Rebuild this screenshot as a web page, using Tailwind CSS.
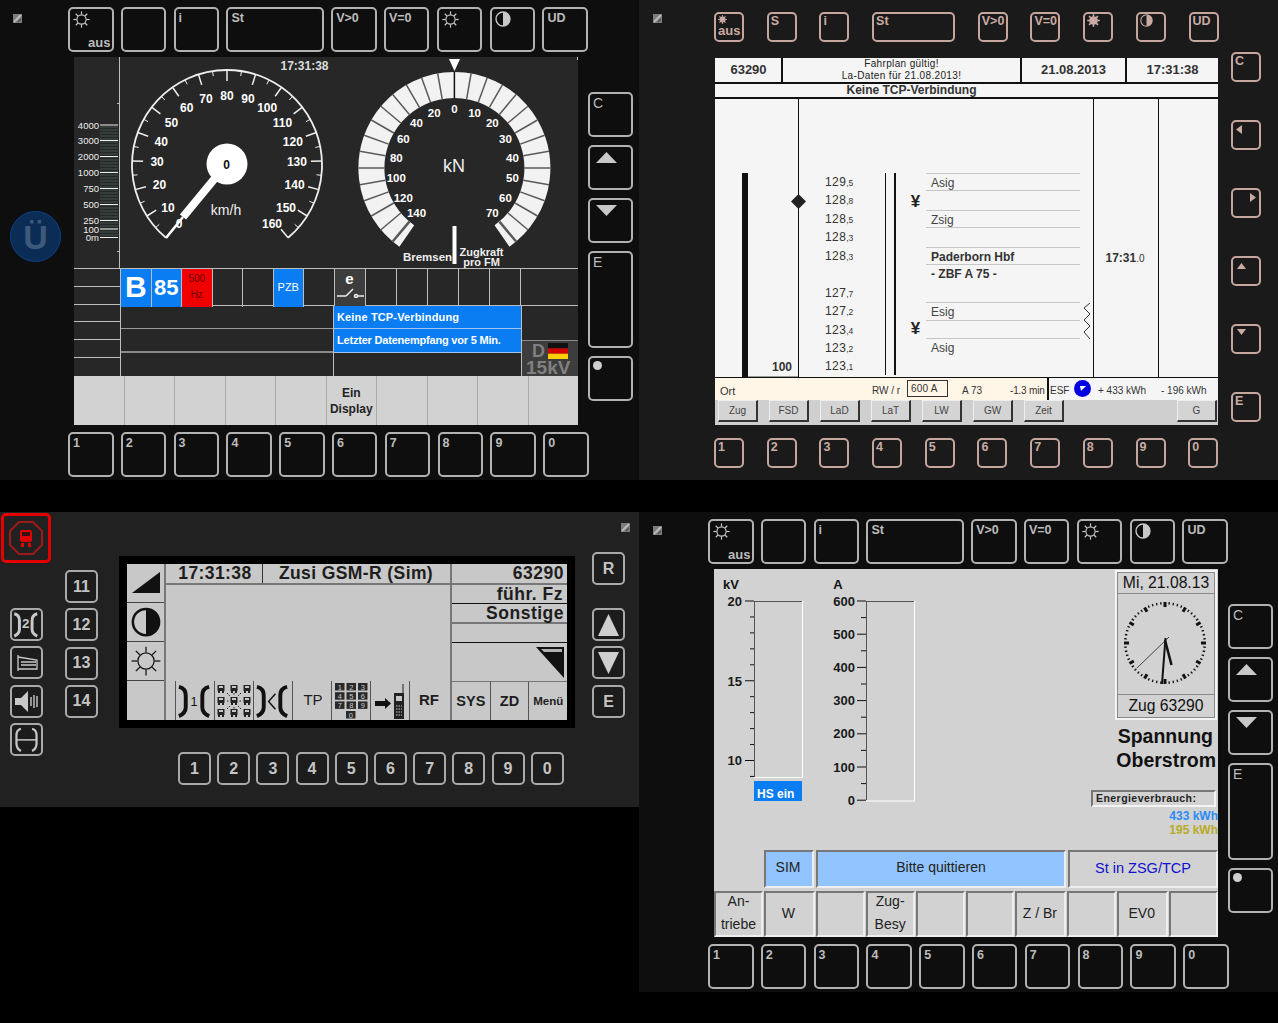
<!DOCTYPE html>
<html lang="de">
<head>
  <meta charset="UTF-8" />
  <title>Zusi Führerstand Displays</title>
  <script src="https://cdn.jsdelivr.net/npm/@tailwindcss/browser@4"></script>
</head>
<body class="bg-black font-['Liberation_Sans',sans-serif] w-[1278px] h-[1023px] overflow-hidden">
  <div class="grid grid-cols-[639px_639px] grid-rows-[480px_511px] gap-y-[32px]">

    <!-- Tacho display -->
    <section class="flex bg-[#0e0e0e] text-white">
      <div id="tlLeft" class="w-[68px] pl-[13px] pt-[14px]"></div>
      <div class="w-[520px] pt-[7px]">
        <div id="tlTop" class="flex gap-[7.3px]"></div>
        <div class="ml-[6px] mt-[5px] w-[504px] h-[368px] bg-[#272727] flex flex-col">
          <div id="tacho" class="h-[211px]"></div>
          <div class="flex h-[108px] border-t border-[#bdbdbd]">
            <div id="tlRows" class="w-[47px] border-r border-[#bdbdbd] flex flex-col"></div>
            <div class="flex-1 flex flex-col">
              <div id="tlStatus" class="h-[37px] border-b border-[#bdbdbd] grid grid-cols-[repeat(7,30.5px)_repeat(6,31px)_1fr]"></div>
              <div class="flex-1 flex">
                <div class="w-[213px] border-r border-[#bdbdbd] flex flex-col">
                  <div class="h-[23px] border-b border-[#9a9a9a]"></div>
                  <div class="h-[24px] border-b-2 border-[#8a8a8a]"></div>
                </div>
                <div class="w-[187px] flex flex-col">
                  <div class="h-[23px] bg-[#0a7df2] border-b border-[#9fc6ee] px-[3px] text-[11px] font-bold leading-[23px] tracking-[0.15px]">Keine TCP-Verbindung</div>
                  <div class="h-[24px] bg-[#0a7df2] border-b border-[#9fc6ee] px-[3px] text-[11px] font-bold leading-[23px] tracking-[-0.2px] whitespace-nowrap">Letzter Datenempfang vor 5 Min.</div>
                </div>
                <div class="flex-1 border-l border-[#bdbdbd] flex flex-col justify-end">
                  <div class="h-[36px] bg-[#3d3d3d] border-t border-[#8a8a8a] relative text-[#808080] font-bold">
                    <span class="absolute left-[10px] top-[3px] text-[18px] leading-[14px]">D</span>
                    <svg class="absolute left-[26px] top-[2px]" width="20" height="16"><rect width="20" height="5.4" fill="#111"/><rect y="5.4" width="20" height="5.3" fill="#d20000"/><rect y="10.7" width="20" height="5.3" fill="#ffce00"/></svg>
                    <span class="absolute left-[4px] top-[19px] text-[19px] leading-[15px]">15kV</span>
                  </div>
                </div>
              </div>
            </div>
          </div>
          <div id="tlSoft" class="flex-1 flex bg-[#d2d2d2] text-[#222] text-[12px] font-bold leading-[16px] text-center"></div>
        </div>
        <div id="tlBottom" class="mt-[7px] flex gap-[7.3px]"></div>
      </div>
      <div id="tlRight" class="w-[45px] pt-[92px] flex flex-col gap-[8px]"></div>
    </section>

    <!-- EBuLa display -->
    <section class="flex bg-[#1a1a1a] text-[#222]">
      <div id="trLeft" class="w-[75px] pl-[14px] pt-[14px]"></div>
      <div class="w-[517px] pt-[12px]">
        <div id="trTop" class="flex gap-[22.7px]"></div>
        <div class="ml-[1px] mt-[16px] w-[503px] h-[367px] bg-[#f5f5f5] flex flex-col">
          <div class="h-[26px] flex border-b-2 border-[#111] font-bold text-[13px] text-[#333] text-center">
            <div class="w-[68px] border-r-2 border-[#111] leading-[24px] pl-[1px]">63290</div>
            <div class="w-[239px] border-r-2 border-[#111] font-normal text-[10px] leading-[12px] text-[#222] tracking-[0.35px] whitespace-nowrap">Fahrplan gültig!<br>La-Daten für 21.08.2013!</div>
            <div class="w-[105px] border-r-2 border-[#111] leading-[24px]">21.08.2013</div>
            <div class="flex-1 leading-[24px]">17:31:38</div>
          </div>
          <div class="h-[15px] border-b-2 border-[#111] font-bold text-[12px] leading-[13px] text-[#333] text-center pr-[110px]">Keine TCP-Verbindung</div>
          <div class="h-[278px] flex">
            <div class="w-[84px] border-r border-[#111] relative">
              <div class="absolute left-[27px] top-[74px] bottom-0 w-[6px] bg-[#111]"></div>
              <div class="absolute left-[33px] right-0 bottom-0 h-px bg-[#999]"></div>
              <div class="absolute right-[6px] bottom-[1px] text-[12px] font-bold text-[#333]">100</div>
              <svg class="absolute left-[76px] top-[95px] z-10" width="15" height="15"><polygon points="7.5,0 15,7.5 7.5,15 0,7.5" fill="#222"/></svg>
            </div>
            <div class="w-[294px] relative pt-[74px] flex">
              <div id="km" class="w-[86px] pl-[26px] grid grid-rows-[repeat(11,18.45px)] text-[12px] leading-[18.45px] tracking-[0.4px] text-[#333]"></div>
              <div class="w-px bg-[#111] h-[202px]"></div>
              <div class="ml-[8px] w-[2px] bg-[#111] h-[202px]"></div>
              <div class="w-[31px] relative font-bold text-[17px] text-[#222] text-center pl-[8px]">
                <span class="absolute left-[8px] right-0 top-[16px]">¥</span>
                <span class="absolute left-[8px] right-0 top-[143px]">¥</span>
              </div>
              <div id="sigs" class="w-[153px] grid grid-rows-[repeat(11,18.45px)] text-[12px] leading-[18px] text-[#444] pl-[4px]"></div>
              <svg class="absolute left-[284px] top-[203px]" width="8" height="38" fill="none" stroke="#333"><path d="M7 1 L1 6 L7 12 L1 18 L7 24 L1 30 L7 37"/></svg>
            </div>
            <div class="w-[65px] border-l border-[#111] text-center pt-[150px] text-[12px] font-bold text-[#333] pr-[2px]">17:31<span class="font-normal text-[10px]">.0</span></div>
            <div class="flex-1 border-l border-[#111]"></div>
          </div>
          <div class="h-[23px] flex border-t border-[#111] text-[10px] text-[#333]">
            <div class="w-[332px] bg-[#fff6e8] flex items-center relative">
              <span class="absolute left-[5px] top-[5px] text-[11px]">Ort</span>
              <span class="absolute left-[157px] top-[5px]">RW / r</span>
              <span class="absolute left-[192px] top-[2px] w-[41px] h-[17px] border border-[#333] pl-[3px] leading-[15px] tracking-[0.2px]">600 A</span>
              <span class="absolute left-[247px] top-[5px]">A 73</span>
              <span class="absolute left-[295px] top-[5px] whitespace-nowrap tracking-[-0.2px]">-1.3 min</span>
            </div>
            <div class="w-[2px] bg-[#111]"></div>
            <div class="flex-1 relative">
              <span class="absolute left-[1px] top-[5px]">ESF</span>
              <svg class="absolute left-[25px] top-[2px]" width="17" height="17"><circle cx="8.5" cy="8.5" r="8.5" fill="#0000e0"/><polygon points="6,6 12,6 7,11" fill="#fff"/></svg>
              <span class="absolute left-[49px] top-[5px] whitespace-nowrap text-[10px]">+ 433 kWh</span>
              <span class="absolute left-[112px] top-[5px] whitespace-nowrap text-[10px]">- 196 kWh</span>
            </div>
          </div>
          <div id="trSoft" class="flex-1 bg-[#cfcfcf] flex pl-[3px] gap-[11px]"></div>
        </div>
        <div id="trBottom" class="mt-[13px] flex gap-[22.7px]"></div>
      </div>
      <div id="trRight" class="w-[30px] pt-[52px] flex flex-col gap-[38px]"></div>
    </section>

    <!-- GSM-R display -->
    <section class="flex bg-[#212121] h-[295px] text-[#c4c4c4]">
      <div class="w-[65px]">
        <div class="mt-[1px] ml-[1px] w-[50px] h-[50px] border-[3px] border-[#e40000] rounded-[5px] flex items-center justify-center">
          <svg width="36" height="36" viewBox="0 0 36 36" fill="none"><polygon points="11,2 25,2 34,11 34,25 25,34 11,34 2,25 2,11" stroke="#9c1a1a" stroke-width="2"/><rect x="12" y="10" width="12" height="12" rx="2" fill="#e00000"/><rect x="14" y="12" width="8" height="4" fill="#3a0f0f"/><rect x="13" y="23" width="3" height="4" fill="#e00000"/><rect x="20" y="23" width="3" height="4" fill="#e00000"/></svg>
        </div>
        <div id="blIcons" class="ml-[10px] mt-[45px] flex flex-col gap-[5.3px]"></div>
      </div>
      <div id="blNums" class="w-[54px] pt-[58px] flex flex-col gap-[5.3px]"></div>
      <div class="w-[473px] pt-[44px]">
        <div class="w-[456px] h-[172px] bg-black p-[8px]">
          <div class="flex h-[156px] bg-[#c8c8c8] text-[#1d1d1d] font-bold">
            <div id="gsmLeft" class="w-[39px] border-r-2 border-[#777] flex flex-col"></div>
            <div class="w-[284px] flex flex-col">
              <div class="h-[21px] flex border-b-2 border-[#777] text-[17.5px] leading-[19px] tracking-[0.4px]">
                <div class="w-[97px] border-r border-[#333] text-center pl-[2px]">17:31:38</div>
                <div class="flex-1 text-center pr-[1px] whitespace-nowrap">Zusi GSM-R (Sim)</div>
              </div>
              <div class="h-[96px]"></div>
              <div id="gsmSoftA" class="h-[39px] flex pl-[9px]"></div>
            </div>
            <div class="flex-1 border-l-2 border-[#777] flex flex-col text-right text-[17.5px] leading-[19px] tracking-[0.5px]">
              <div class="h-[21px] border-b-2 border-[#777] pr-[3px]">63290</div>
              <div class="h-[19px] border-b border-[#111] pr-[4px]">führ. Fz</div>
              <div class="h-[20px] border-b-2 border-[#777] pr-[3px]">Sonstige</div>
              <div class="h-[19px] border-b border-[#111]"></div>
              <div class="h-[38px] flex justify-end items-center pr-[3px]">
                <svg width="28" height="31"><polygon points="0,0 28,0 28,31" fill="#111"/><polygon points="5,2 26,2 26,5 8,5" fill="#b0b0b0"/></svg>
              </div>
              <div id="gsmSoftB" class="h-[39px] flex border-t border-[#777]"></div>
            </div>
          </div>
        </div>
        <div id="blBottom" class="mt-[24px] ml-[59px] flex gap-[6.2px]"></div>
      </div>
      <div class="w-[47px] relative pt-[40px]">
        <div id="blRight" class="flex flex-col"></div>
        <div id="blMark" class="absolute left-[29px] top-[11px]"></div>
      </div>
    </section>

    <!-- Spannung / Oberstrom display -->
    <section class="flex bg-[#0e0e0e] h-[480px] text-[#222]">
      <div id="brLeft" class="w-[69px] pl-[14px] pt-[14px]"></div>
      <div class="w-[520px] pt-[7px]">
        <div id="brTop" class="flex gap-[7.3px]"></div>
        <div class="ml-[6px] mt-[5px] w-[504px] h-[368px] bg-[#d2d2d2] flex flex-col">
          <div class="h-[281px] flex">
            <div id="bars" class="w-[377px]"></div>
            <div class="w-[127px] flex flex-col items-stretch">
              <div class="ml-[24px] mr-px mt-px h-[150px] border-2 border-[#f4f4f4] flex flex-col text-center text-[15.7px] text-[#111]">
                <div class="h-[22px] border border-[#888] leading-[20px] whitespace-nowrap">Mi, 21.08.13</div>
                <div id="clock" class="h-[100px] border-x border-[#888]"></div>
                <div class="flex-1 border border-[#888] leading-[21px]">Zug 63290</div>
              </div>
              <div class="mt-[4px] text-right text-[19.5px] font-bold leading-[24px] text-[#111] pr-[2px]"><span class="mr-[3px]">Spannung</span><br>Oberstrom</div>
              <div class="mt-[18px] h-[17px] w-[125px] border-2 border-t-[#777] border-l-[#777] border-r-[#f4f4f4] border-b-[#f4f4f4] text-[10.5px] font-bold leading-[13px] pl-[3px] tracking-[0.45px] whitespace-nowrap">Energieverbrauch:</div>
              <div class="text-right text-[12px] font-bold leading-[14px] text-[#2a8cf4] mt-[2px] whitespace-nowrap">433 kWh</div>
              <div class="text-right text-[12px] font-bold leading-[14px] text-[#b8aa28] whitespace-nowrap">195 kWh</div>
            </div>
          </div>
          <div class="h-[38px] ml-[50px] flex gap-[2px] text-[14px] text-center leading-[31px]">
            <div class="w-[50px] bg-[#92c5ff] border-2 border-t-[#777] border-l-[#777] border-r-[#eee] border-b-[#eee] pr-[2px]">SIM</div>
            <div class="w-[250px] bg-[#92c5ff] border-2 border-t-[#777] border-l-[#777] border-r-[#eee] border-b-[#eee]">Bitte quittieren</div>
            <div class="w-[150px] text-[#1010d0] border-2 border-t-[#777] border-l-[#777] border-r-[#eee] border-b-[#eee] leading-[33px] text-[14.5px] whitespace-nowrap">St in ZSG/TCP</div>
          </div>
          <div id="brSoft" class="mt-[3px] h-[46px] flex gap-px"></div>
        </div>
        <div id="brBottom" class="mt-[7px] flex gap-[7.3px]"></div>
      </div>
      <div id="brRight" class="w-[45px] pt-[92px] flex flex-col gap-[8px]"></div>
    </section>
  </div>

  <script>
    const $ = id => document.getElementById(id);
    const GREY = 'border-[#b2b2b2] text-[#bcbcbc] bg-[#0e0e0e] pl-[3px] pt-[2px]';
    const TAN = 'border-[#c4a69d] text-[#c9aba2] bg-[#1a1a1a] pl-[2px] pt-0';
    const BIG = 'w-[45.5px] h-[45px]';
    const BIG_WIDE = 'w-[97.5px] h-[45px]';
    const TALL = 'w-[45px] h-[45px]';
    const TALLER = 'w-[45px] h-[97px]';
    const SMALL = 'w-[30px] h-[30px]';
    const SMALL_WIDE = 'w-[83px] h-[30px]';

    const sun = (size, stroke, filled) => {
      let rays = '';
      for (let a = 0; a < 360; a += 45) {
        const s = Math.sin(a * Math.PI / 180), c = Math.cos(a * Math.PI / 180);
        rays += `<line x1="${12 + 7 * s}" y1="${12 - 7 * c}" x2="${12 + 11.5 * s}" y2="${12 - 11.5 * c}"/>`;
      }
      const sw = filled ? 3 : Math.max(1, 28 / size);
      return `<svg width="${size}" height="${size}" viewBox="0 0 24 24" fill="${filled ? stroke : 'none'}" stroke="${stroke}" stroke-width="${sw}"><circle cx="12" cy="12" r="6.5"/>${rays}</svg>`;
    };
    const contrast = (size, stroke, filled) => `<svg width="${size}" height="${size}" viewBox="0 0 24 24"><circle cx="12" cy="12" r="10.5" fill="${filled ? stroke : 'none'}" stroke="${stroke}" stroke-width="2"/><path d="M12 1.5 A10.5 10.5 0 0 1 12 22.5 Z" fill="${stroke}"/></svg>`;
    const tri = (dir, w, h, fill) => {
      const pts = { up: `0,${h} ${w},${h} ${w / 2},0`, down: `0,0 ${w},0 ${w / 2},${h}`, left: `${w},0 ${w},${h} 0,${h / 2}`, right: `0,0 0,${h} ${w},${h / 2}` }[dir];
      return `<svg width="${w}" height="${h}"><polygon points="${pts}" fill="${fill}"/></svg>`;
    };
    const mark = `<svg width="9" height="9"><rect width="9" height="9" fill="#7c7c7c"/><path d="M1 8 L8 1" stroke="#bbb" stroke-width="2"/><path d="M5 8 L8 5" stroke="#555" stroke-width="1.5"/></svg>`;

    // outlined soft key of the display frames
    const key = (size, tone, label = '', extra = '') => `<div class="${size} ${tone} relative shrink-0 border-2 rounded-[5px] text-[12.5px] font-bold leading-[14px]">${label}${extra}</div>`;

    const bigTop = tone => [
      key(BIG, tone, sun(17, '#c8c8c8'), `<span class="absolute right-[1px] bottom-0 text-[13px]">aus</span>`),
      key(BIG, tone), key(BIG, tone, 'i'), key(BIG_WIDE, tone, 'St'),
      key(BIG, tone, 'V>0'), key(BIG, tone, 'V=0'), key(BIG, tone, sun(17, '#c8c8c8')),
      key(BIG, tone, contrast(16, '#c8c8c8')), key(BIG, tone, 'UD')
    ].join('');
    const digits = '1234567890'.split('');
    const bigBottom = tone => digits.map(d => key(BIG, tone, d)).join('');
    const letter = s => `<span class="font-normal text-[14px]">${s}</span>`;
    const bigRight = tone => [
      key(TALL, tone, letter('C')),
      key(TALL, tone, `<div class="pl-[3px] pt-[3px]">${tri('up', 21, 11, '#c8c8c8')}</div>`),
      key(TALL, tone, `<div class="pl-[3px] pt-[3px]">${tri('down', 21, 11, '#c8c8c8')}</div>`),
      key(TALLER, tone, letter('E')),
      key(TALL, tone, `<div class="w-[9px] h-[9px] rounded-full bg-[#cfcfcf] mt-[1px]"></div>`)
    ].join('');

    $('tlLeft').innerHTML = mark + `<div class="mt-[188px] -ml-[3px] w-[51px] h-[51px] rounded-full bg-[#0a2c55] border border-[#0d4389] flex items-center justify-center text-[34px] font-bold text-[#3d5a7b] leading-none">Ü</div>`;
    $('tlTop').innerHTML = bigTop(GREY);
    $('tlBottom').innerHTML = bigBottom(GREY);
    $('tlRight').innerHTML = bigRight(GREY);
    $('brLeft').innerHTML = mark;
    $('brTop').innerHTML = bigTop(GREY);
    $('brBottom').innerHTML = bigBottom(GREY);
    $('brRight').innerHTML = bigRight(GREY);

    // left scale rows beside status fields
    $('tlRows').innerHTML = Array.from({ length: 6 }, (_, i) => `<div class="h-[18px] ${i < 5 ? 'border-b border-[#bdbdbd]' : ''}"></div>`).join('');

    const cellLine = 'border-r border-[#bdbdbd]';
    const status = [
      `<div class="bg-[#0a7df2] ${cellLine} text-[30px] font-bold text-center leading-[36px]">B</div>`,
      `<div class="bg-[#0a7df2] ${cellLine} text-[22px] font-bold text-center leading-[38px]">85</div>`,
      `<div class="bg-[#f00000] ${cellLine} text-[10px] text-[#6a0000] text-center leading-[16px] pt-[2px]">500<br>Hz</div>`,
      `<div class="${cellLine}"></div>`, `<div class="${cellLine}"></div>`,
      `<div class="bg-[#0a7df2] ${cellLine} text-[11px] text-center leading-[36px]">PZB</div>`,
      `<div class="${cellLine}"></div>`,
      `<div class="bg-[#3d3d3d] ${cellLine} flex flex-col items-center"><span class="text-[15px] font-bold leading-[18px] mt-[1px]">e</span><svg width="28" height="10" fill="none" stroke="#eee" stroke-width="1.5"><path d="M1 8 H10 M10 8 L17 1"/><circle cx="20" cy="8" r="1.5"/><path d="M22 8 H28"/></svg></div>`
    ];
    for (let i = 0; i < 5; i++) status.push(`<div class="${cellLine}"></div>`);
    status.push('<div></div>');
    $('tlStatus').innerHTML = status.join('');

    $('tlSoft').innerHTML = Array.from({ length: 10 }, (_, i) => `<div class="flex-1 ${i ? 'border-l border-[#a9a9a9]' : ''} pt-[9px]">${i === 5 ? 'Ein<br>Display' : ''}</div>`).join('');

    // tacho and force gauge, drawn in page coordinates
    const polar = (cx, cy, r, deg) => [cx + r * Math.sin(deg * Math.PI / 180), cy - r * Math.cos(deg * Math.PI / 180)];
    const seg = (cx, cy, r1, r2, deg) => {
      const [x1, y1] = polar(cx, cy, r1, deg), [x2, y2] = polar(cx, cy, r2, deg);
      return `x1="${x1.toFixed(1)}" y1="${y1.toFixed(1)}" x2="${x2.toFixed(1)}" y2="${y2.toFixed(1)}"`;
    };
    const label = (x, y, t, size, fill = '#fff', weight = 'bold', anchor = 'middle') => `<text x="${x}" y="${y}" font-size="${size}" font-weight="${weight}" fill="${fill}" text-anchor="${anchor}">${t}</text>`;

    let t = `<svg width="504" height="211" viewBox="74 57 504 211">`;
    t += `<path d="M119.5 57 V268 M117 103.5 H120 M117 251.5 H120 M577.5 57 V60" stroke="#bdbdbd" fill="none"/>`;
    for (let y = 127; y < 237; y += 3) t += `<line x1="100" y1="${y}" x2="118" y2="${y}" stroke="#41564f"/>`;
    [['4000', 125], ['3000', 140.5], ['2000', 156.5], ['1000', 172.5], ['750', 188.5], ['500', 204.5], ['250', 220.5], ['100', 229], ['0m', 237.5]].forEach(([s, y]) => {
      t += `<line x1="100" y1="${y}" x2="118" y2="${y}" stroke="#eee"/>`;
      t += label(99, y + 3.5, s, 9.5, '#eee', 'normal', 'end');
    });
    const [ax, ay] = polar(227, 165, 95, -140), [bx, by] = polar(227, 165, 95, 140);
    t += `<path d="M${ax} ${ay} A95 95 0 1 1 ${bx} ${by}" fill="none" stroke="#eee" stroke-width="1.8"/>`;
    for (let v = 0; v <= 160; v += 5) {
      const d = -140 + v * 1.75;
      t += `<line ${seg(227, 165, 95, v % 10 ? 90 : 84, d)} stroke="#eee" stroke-width="${v % 10 ? 1 : 1.5}"/>`;
      if (v && v % 10 === 0) {
        const [x, y] = polar(227, 165, 70, d);
        // lower labels sit a little below their polar place
        const dy = v === 10 || v >= 150 ? 9 : v === 20 || v === 140 ? 6 : 4.5;
        t += label(x.toFixed(1), (y + dy).toFixed(1), v, 12);
      }
    }
    t += label(179, 228, '0', 12);
    t += `<line x1="216" y1="177" x2="183" y2="217" stroke="#fff" stroke-width="8"/><line x1="183" y1="217" x2="166" y2="238" stroke="#fff" stroke-width="2.5"/>`;
    t += `<circle cx="227" cy="164" r="20.5" fill="#fff"/>`;
    t += label(226.5, 168.5, '0', 12, '#111');
    t += label(226, 215, 'km/h', 14, '#eee', 'normal');
    t += label(304.5, 69.5, '17:31:38', 12, '#ddd');

    const [cx, cy] = [454.4, 168];
    const [fa, fb] = [polar(cx, cy, 83, -145), polar(cx, cy, 83, 145)];
    t += `<path d="M${fa[0]} ${fa[1]} A83 83 0 1 1 ${fb[0]} ${fb[1]}" fill="none" stroke="#f2f2f2" stroke-width="26"/>`;
    for (let d = -140; d <= 140; d += 10) {
      t += `<line ${seg(cx, cy, 70, 96, d)} stroke="${d ? '#5a5a5a' : '#111'}" stroke-width="${Math.abs(d) === 140 ? 2.5 : 1.5}"/>`;
    }
    t += `<polygon points="449,59 460,59 454.5,71" fill="#fff"/>`;
    for (let n = 0; n <= 7; n++) {
      const [x, y] = polar(cx, cy, 59, -n * 20);
      t += label(x.toFixed(1), (y + 4).toFixed(1), n * 20, 11.5);
      if (n) {
        const [x2, y2] = polar(cx, cy, 59, n * 20);
        t += label(x2.toFixed(1), (y2 + 4).toFixed(1), n * 10, 11.5);
      }
    }
    t += label(454, 172, 'kN', 18, '#eee', 'normal');
    t += `<rect x="452.5" y="226" width="4" height="38" fill="#fff"/>`;
    t += label(427.5, 261, 'Bremsen', 11.5, '#eee');
    t += label(481.5, 256, 'Zugkraft', 11, '#eee');
    t += label(481.5, 266, 'pro FM', 11, '#eee');
    t += `</svg>`;
    $('tacho').innerHTML = t;

    // EBuLa
    $('trLeft').innerHTML = mark;
    $('trTop').innerHTML = [
      key(SMALL, TAN, `<div class="flex flex-col pt-[1px]">${sun(9, '#c9aba2', true)}<span class="text-[13px] leading-[13px]">aus</span></div>`),
      key(SMALL, TAN, 'S'), key(SMALL, TAN, 'i'), key(SMALL_WIDE, TAN, 'St'),
      key(SMALL, TAN, 'V>0'), key(SMALL, TAN, 'V=0'), key(SMALL, TAN, sun(13, '#c9aba2', true)),
      key(SMALL, TAN, contrast(13, '#c9aba2')), key(SMALL, TAN, 'UD')
    ].join('');
    $('trBottom').innerHTML = digits.map(d => key(SMALL, TAN, d)).join('');
    $('trRight').innerHTML = [
      key(SMALL, TAN, 'C'),
      key(SMALL, TAN, `<div class="pt-[3px] pl-[1px]">${tri('left', 6, 9, '#c9aba2')}</div>`),
      key(SMALL, TAN, `<div class="pt-[3px] pl-[15px]">${tri('right', 6, 9, '#c9aba2')}</div>`),
      key(SMALL, TAN, `<div class="pt-[5px] pl-[2px]">${tri('up', 9, 6, '#c9aba2')}</div>`),
      key(SMALL, TAN, `<div class="pt-[3px] pl-[2px]">${tri('down', 9, 6, '#c9aba2')}</div>`),
      key(SMALL, TAN, 'E')
    ].join('');
    $('km').innerHTML = [['129', '5'], ['128', '8'], ['128', '5'], ['128', '3'], ['128', '3'], ['', ''], ['127', '7'], ['127', '2'], ['123', '4'], ['123', '2'], ['123', '1']]
      .map(([a, b]) => `<div>${a}<span class="text-[8.5px] tracking-normal">${b && ',' + b}</span></div>`).join('');
    // rows of the signal list: text, bold, lines at top / bottom
    const LINE_TB = 'border-t border-b border-[#c6c6c6]', LINE_B = 'border-b border-[#c6c6c6]';
    $('sigs').innerHTML = [
      ['Asig', 0, LINE_TB], ['', 0, ''], ['Zsig', 0, LINE_TB], ['', 0, ''], ['Paderborn Hbf', 1, LINE_TB], ['- ZBF A 75 -', 1, ''],
      ['', 0, ''], ['Esig', 0, LINE_TB], ['', 0, LINE_B], ['Asig', 0, ''], ['', 0, '']
    ].map(([s, b, l]) => `<div class="-ml-[5px] pl-[5px] ${l} ${b ? 'font-bold text-[#333]' : ''}">${s}</div>`).join('');
    const flat = 'h-[22px] mt-0 bg-[#d4d4d4] border-t border-l border-[#eee] border-b-2 border-r-2 border-b-[#333] border-r-[#333] text-[10px] text-[#444] text-center leading-[20px]';
    $('trSoft').innerHTML = ['Zug', 'FSD', 'LaD', 'LaT', 'LW', 'GW', 'Zeit'].map(s => `<div class="${flat} w-[40px]">${s}</div>`).join('')
      + `<div class="${flat} w-[40px] ml-[102px]">G</div>`;

    // GSM-R
    const MINI = 'w-[33px] h-[33px]';
    const miniTone = 'border-[#a9a9a9] bg-[#1c1c1c] text-[#c4c4c4]';
    const mini = (inner, cls = '') => `<div class="${MINI} ${miniTone} ${cls} shrink-0 border-2 rounded-[5px] flex items-center justify-center text-[16px] font-bold">${inner}</div>`;
    const bracket = (mid, stroke, w, h, sw) => `<svg width="${w}" height="${h}" viewBox="0 0 39 39" fill="none" stroke="${stroke}" stroke-width="${sw}"><path d="M3 5 C8 6 10 10 10 14 V26 C10 30 8 33 3 35"/><path d="M34 5 C29 6 27 10 27 14 V26 C27 30 29 33 34 35"/>${mid}</svg>`;
    const lightTxt = (s, y, size) => `<text x="18.5" y="${y}" text-anchor="middle" font-size="${size}" fill="#c8c8c8" stroke="none" font-weight="bold">${s}</text>`;
    $('blIcons').innerHTML = [
      mini(bracket(lightTxt('2', 24, 18), '#c8c8c8', 29, 29, 4)),
      mini(`<svg width="22" height="22" viewBox="0 0 22 22" fill="none" stroke="#c8c8c8" stroke-width="1.3"><path d="M2 3 V19 M2 5 L21 8 V17 H2 M5 10 H20 M5 13 H20"/></svg>`),
      mini(`<svg width="27" height="27" viewBox="0 0 27 27"><path d="M2 10 H8 L15 3 V24 L8 17 H2 Z" fill="#c8c8c8"/><path d="M18 9 V18 M21 7 V20 M24 8 V19" stroke="#c8c8c8" stroke-width="1.4"/></svg>`),
      mini(`<svg width="29" height="29" viewBox="0 0 39 39" fill="none" stroke="#c8c8c8" stroke-width="3"><path d="M12 5 C8 6 6 9 6 14 V25 C6 30 8 33 12 35"/><path d="M27 5 C31 6 33 9 33 14 V25 C33 30 31 33 27 35"/><path d="M6 20 H33" stroke-width="2"/></svg>`)
    ].join('');
    $('blNums').innerHTML = ['11', '12', '13', '14'].map(n => mini(n)).join('');
    $('blBottom').innerHTML = digits.map(d => mini(d)).join('');
    $('blRight').innerHTML = [
      mini('R'),
      mini(tri('up', 21, 22, '#cfcfcf'), 'mt-[23px]'),
      mini(tri('down', 21, 22, '#cfcfcf'), 'mt-[5px]'),
      mini('E', 'mt-[6px]')
    ].join('');
    $('blMark').innerHTML = mark;

    const gsmBox = 'h-[39px] flex items-center justify-center';
    $('gsmLeft').innerHTML = [
      `<div class="${gsmBox} border-b border-[#444]"><svg width="30" height="24"><polygon points="1,22 29,1 29,22" fill="#111"/></svg></div>`,
      `<div class="${gsmBox} border-b border-[#444]">${contrast(30, '#111')}</div>`,
      `<div class="${gsmBox} border-b border-[#444]">${sun(30, '#111')}</div>`,
      `<div class="flex-1"></div>`
    ].join('');

    const trainGrid = () => {
      let s = `<svg width="36" height="36" viewBox="0 0 36 36">`;
      [5, 18, 31].forEach(x => [6, 18, 30].forEach(y => {
        s += `<rect x="${x - 3.5}" y="${y - 4}" width="7" height="6" fill="#222"/><rect x="${x - 2}" y="${y - 3}" width="4" height="2" fill="#c8c8c8"/><rect x="${x - 3}" y="${y + 2}" width="2" height="2" fill="#222"/><rect x="${x + 1}" y="${y + 2}" width="2" height="2" fill="#222"/>`;
      }));
      return s + `<path d="M11 10 L14 13 M25 10 L22 13 M11 18 H13 M25 18 H23 M11 26 L14 23 M25 26 L22 23 M18 10 V12 M18 24 V26" stroke="#222" stroke-dasharray="1.5 1"/></svg>`;
    };
    const keypad = () => {
      let s = `<svg width="38" height="38" viewBox="0 0 38 38">`;
      [1, 2, 3, 4, 5, 6, 7, 8, 9, 0].forEach((n, i) => {
        const x = n === 0 ? 14 : 3 + ((i % 3) * 11.5), y = n === 0 ? 29 : 1 + Math.floor(i / 3) * 9.2;
        s += `<rect x="${x}" y="${y}" width="9.5" height="7.5" fill="#2a2a2a"/><text x="${x + 4.75}" y="${y + 6.5}" text-anchor="middle" font-size="7.5" fill="#c8c8c8" font-weight="normal">${n}</text>`;
      });
      return s + `</svg>`;
    };
    const phone = `<svg width="38" height="38" viewBox="0 0 38 38"><rect x="4" y="19" width="10" height="5" fill="#111"/><polygon points="14,16 20,21.5 14,27" fill="#111"/><rect x="23" y="11" width="10" height="26" fill="#222"/><rect x="25" y="14" width="6" height="5" fill="#c8c8c8"/><path d="M32 11 V2" stroke="#222"/><path d="M25 24 H31 M25 27 H31 M25 30 H31 M25 33 H31" stroke="#c8c8c8" stroke-dasharray="1.5 1"/></svg>`;
    const softCell = (inner, cls = '') => `<div class="w-[39px] border-l border-[#555] flex items-center justify-center ${cls}">${inner}</div>`;
    $('gsmSoftA').innerHTML = [
      softCell(bracket(`<text x="18.5" y="25" text-anchor="middle" font-size="13" fill="#111" stroke="none" font-weight="normal">1</text>`, '#111', 38, 38, 4)),
      softCell(trainGrid()),
      softCell(bracket(`<path d="M22 12 L15 20 L22 28" stroke-width="1.5"/>`, '#111', 38, 38, 4)),
      softCell(`<span class="font-normal text-[15px] pl-[2px]">TP</span>`),
      softCell(keypad()), softCell(phone),
      softCell(`<span class="text-[15px]">RF</span>`)
    ].join('');
    $('gsmSoftB').innerHTML = [['SYS', 'text-[14.5px]'], ['ZD', 'text-[14.5px]'], ['Menü', 'text-[11.5px]']]
      .map(([s, c], i) => `<div class="${i ? 'border-l border-[#555]' : ''} flex-1 text-center leading-[38px] tracking-normal ${c}">${s}</div>`).join('');

    // Spannung / Oberstrom bars
    let b = `<svg width="377" height="281" viewBox="714 569 377 281">`;
    b += label(731, 589, 'kV', 13, '#111');
    b += label(838, 589, 'A', 13, '#111');
    b += `<path d="M754.5 601 V777" stroke="#555"/><path d="M754 601.5 H802" stroke="#555"/><path d="M802.5 601 V777 M754 777.5 H803" stroke="#fff"/>`;
    for (let i = 0; i <= 11; i++) {
      const y = 601 + i * 15.95, major = i % 5 === 0;
      b += `<line x1="${major ? 745 : 750}" y1="${y}" x2="754" y2="${y}" stroke="#111"/>`;
    }
    [['20', 601], ['15', 681], ['10', 760]].forEach(([s, y]) => { b += label(742, y + 4.5, s, 13, '#1a1a1a', 'bold', 'end'); });
    b += `<rect x="754" y="781" width="48" height="20" fill="#0a7df2"/>` + label(757, 798, 'HS ein', 12, '#fff', 'bold', 'start');
    b += `<path d="M866.5 601 V800" stroke="#555"/><path d="M866 601.5 H914" stroke="#555"/><path d="M914.5 601 V801 M866 801 H915" stroke="#fff"/>`;
    for (let i = 0; i <= 12; i++) {
      const y = 601 + i * 16.6, major = i % 2 === 0;
      b += `<line x1="${major ? 857 : 861}" y1="${y}" x2="866" y2="${y}" stroke="#111"/>`;
      if (major) b += label(855, y + 4.5, 600 - i * 50, 13, '#1a1a1a', 'bold', 'end');
    }
    $('bars').innerHTML = b + `</svg>`;

    // station clock
    let c = `<svg width="96" height="100" viewBox="1118 594 96 100">`;
    for (let i = 0; i < 60; i++) {
      const big = i % 5 === 0;
      c += `<line ${seg(1165, 643, 41, big ? 36 : 38.5, i * 6)} stroke="#111" stroke-width="${big ? 3 : 1.3}"/>`;
    }
    c += `<line x1="1165" y1="640" x2="1171.5" y2="665" stroke="#111" stroke-width="2.5"/>`;
    c += `<line x1="1165.5" y1="638" x2="1162" y2="684" stroke="#111" stroke-width="2"/>`;
    c += `<line x1="1169" y1="637" x2="1137" y2="668" stroke="#222" stroke-width="0.8"/>`;
    $('clock').innerHTML = c + `</svg>`;

    const sunk = 'flex-1 text-center text-[14px] leading-[23px] border-2 border-t-[#777] border-l-[#777] border-r-[#eee] border-b-[#eee]';
    $('brSoft').innerHTML = ['An-<br>triebe', 'W', '', 'Zug-<br>Besy', '', '', 'Z / Br', '', 'EV0', ''].map(s => {
      const oneLine = s && !s.includes('<br>');
      return `<div class="${sunk} ${oneLine ? 'pt-[9px] pr-[2px]' : ''}"><div class="${oneLine ? '' : '-mt-[3px]'}">${s}</div></div>`;
    }).join('');
  </script>
</body>
</html>
